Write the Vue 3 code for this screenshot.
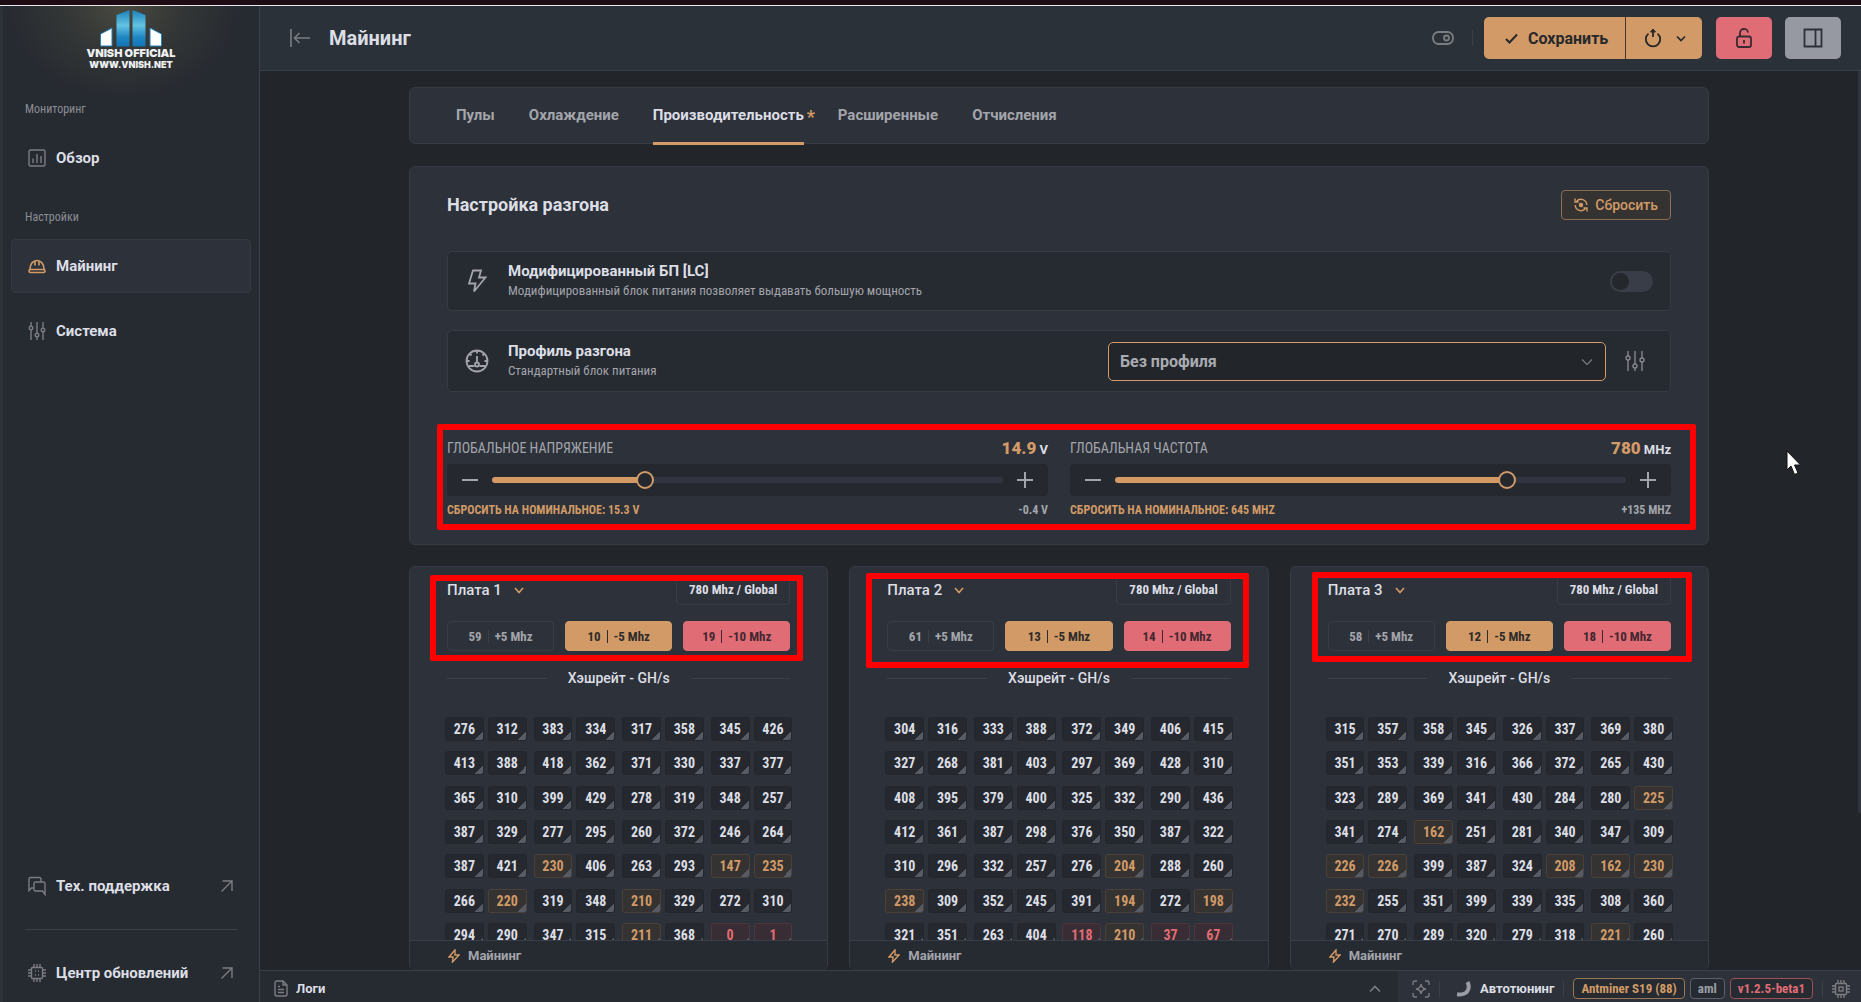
<script setup>
import { ref } from 'vue'

const tabs = ['Пулы', 'Охлаждение', 'Производительность', 'Расширенные', 'Отчисления']
const activeTab = ref('Производительность')
const modifiedPsu = ref(false)
const profile = ref('none')

const sliders = ref([
  {
    id: 'voltage', label: 'Глобальное напряжение', value: 14.9, min: 13.7, max: 17.8, step: 0.1,
    unit: 'V', reset: 'Сбросить на номинальное: 15.3 V', delta: '-0.4 V',
  },
  {
    id: 'frequency', label: 'Глобальная частота', value: 780, min: 220, max: 940, step: 5,
    unit: 'MHz', reset: 'Сбросить на номинальное: 645 MHz', delta: '+135 MHz',
  },
])

const fillOf = (s) => (s.value - s.min) / (s.max - s.min)

const boards = [
  {
    id: 1, counts: [59, 10, 19],
    rows: [
      [276, 312, 383, 334, 317, 358, 345, 426],
      [413, 388, 418, 362, 371, 330, 337, 377],
      [365, 310, 399, 429, 278, 319, 348, 257],
      [387, 329, 277, 295, 260, 372, 246, 264],
      [387, 421, 230, 406, 263, 293, 147, 235],
      [266, 220, 319, 348, 210, 329, 272, 310],
      [294, 290, 347, 315, 211, 368, 0, 1],
    ],
  },
  {
    id: 2, counts: [61, 13, 14],
    rows: [
      [304, 316, 333, 388, 372, 349, 406, 415],
      [327, 268, 381, 403, 297, 369, 428, 310],
      [408, 395, 379, 400, 325, 332, 290, 436],
      [412, 361, 387, 298, 376, 350, 387, 322],
      [310, 296, 332, 257, 276, 204, 288, 260],
      [238, 309, 352, 245, 391, 194, 272, 198],
      [321, 351, 263, 404, 118, 210, 37, 67],
    ],
  },
  {
    id: 3, counts: [58, 12, 18],
    rows: [
      [315, 357, 358, 345, 326, 337, 369, 380],
      [351, 353, 339, 316, 366, 372, 265, 430],
      [323, 289, 369, 341, 430, 284, 280, 225],
      [341, 274, 162, 251, 281, 340, 347, 309],
      [226, 226, 399, 387, 324, 208, 162, 230],
      [232, 255, 351, 399, 339, 335, 308, 360],
      [271, 270, 289, 320, 279, 318, 221, 260],
    ],
  },
]

const level = (v) => (v < 120 ? 'bad' : v < 240 ? 'warn' : '')
const pairs = (row) => [0, 2, 4, 6].map((i) => row.slice(i, i + 2))
</script>

<template>
  <div class="screen">
    <div class="frame-top"></div>
    <div class="app">
      <aside class="sidebar">
        <div class="logo">
          <svg width="64" height="38" viewBox="0 0 64 38" aria-hidden="true">
            <defs>
              <linearGradient id="tower" x1="0" y1="0" x2="0" y2="1">
                <stop offset="0" stop-color="#1a80bb" />
                <stop offset=".42" stop-color="#63c3e2" />
                <stop offset=".75" stop-color="#1f86c4" />
                <stop offset="1" stop-color="#1273b4" />
              </linearGradient>
            </defs>
            <path d="M1.500 37V25L13 19V37Z" fill="#fff" stroke="#2380b8" stroke-width="1" />
            <path d="M62.500 37V25L51 19V37Z" fill="#fff" stroke="#2380b8" stroke-width="1" />
            <path d="M17.500 37.500V6L30.500 1V37.500Z" fill="url(#tower)" stroke="none" />
            <path d="M46.500 37.500V6L33.500 1V37.500Z" fill="url(#tower)" stroke="none" />
          </svg>
          <span class="logo-name">VNISH OFFICIAL</span>
          <span class="logo-site">WWW.VNISH.NET</span>
        </div>

        <nav class="menu">
          <p class="menu-title">Мониторинг</p>
          <a class="item" href="#">
            <svg class="ico" width="18" height="18" viewBox="0 0 18 18"><rect x="1" y="1" width="16" height="16" rx="1.500" /><path d="M5 9.500V14M9 5V14M13 7V14" /></svg>
            <span>Обзор</span>
          </a>
          <p class="menu-title second">Настройки</p>
          <a class="item active" href="#">
            <svg class="ico" width="18" height="18" viewBox="0 0 18 18"><rect x="1" y="12.500" width="16" height="3" rx="1.500" /><path d="M2 12C2 7 5 3.500 9 3.500S16 7 16 12M7 4V8.500M11 4V8.500" /></svg>
            <span>Майнинг</span>
          </a>
          <a class="item" href="#">
            <svg class="ico" width="18" height="20" viewBox="0 0 18 20"><path d="M3 1V5M3 9V19M9 1V12M9 16V19M15 1V7M15 11V19" /><circle cx="3" cy="7" r="1.800" /><circle cx="9" cy="14" r="1.800" /><circle cx="15" cy="9" r="1.800" /></svg>
            <span>Система</span>
          </a>
        </nav>

        <nav class="menu bottom">
          <a class="item" href="#">
            <svg class="ico" width="18" height="20" viewBox="0 0 18 20"><path d="M13 6V3Q13 1.500 11.500 1.500H2.500Q1 1.500 1 3V14.500L3.500 12H6" /><path d="M7.500 6H15.500Q17 6 17 7.500V18.500L14.500 15H7.500Q6 15 6 13.500V7.500Q6 6 7.500 6Z" /></svg>
            <span>Тех. поддержка</span>
            <svg class="ico out" width="12" height="12" viewBox="0 0 12 12"><path d="M.500 11.500L11 1M1.500 1H11V11" /></svg>
          </a>
          <hr />
          <a class="item" href="#">
            <svg class="ico" width="18" height="18" viewBox="0 0 18 18"><rect x="3.500" y="3.500" width="11" height="11" rx="1" /><path d="M6 0V3.500M9 0V3.500M12 0V3.500M6 14.500V18M9 14.500V18M12 14.500V18M0 6H3.500M0 9H3.500M0 12H3.500M14.500 6H18M14.500 9H18M14.500 12H18" /><path d="M7 7H8M10 7H11M7 11H8M10 11H11" /></svg>
            <span>Центр обновлений</span>
            <svg class="ico out" width="12" height="12" viewBox="0 0 12 12"><path d="M.500 11.500L11 1M1.500 1H11V11" /></svg>
          </a>
        </nav>
      </aside>

      <div class="main">
        <header class="header">
          <button class="bare" aria-label="Свернуть меню">
            <svg class="ico" width="20" height="18" viewBox="0 0 20 18"><path d="M1 0V18M20 9H5M9.500 4L4.500 9L9.500 14" stroke-width="1.600" /></svg>
          </button>
          <h1>Майнинг</h1>
          <button class="bare push" aria-label="Режим">
            <svg class="ico" width="22" height="14" viewBox="0 0 22 14"><rect x="1" y="1" width="20" height="12" rx="5.500" stroke-width="1.800" /><circle cx="14.500" cy="7" r="2.500" stroke-width="1.800" /></svg>
          </button>
          <span class="vr"></span>
          <div class="save">
            <button class="save-main">
              <svg width="13" height="11" viewBox="0 0 13 11"><path d="M1 6L4.500 9.500L12 1.500" /></svg>
              <span>Сохранить</span>
            </button>
            <button class="save-more" aria-label="Действия">
              <svg width="18" height="20" viewBox="0 0 18 20"><path d="M4.500 5.600A7.200 7.200 0 1 0 13.500 5.600M9 9V2" stroke-width="1.800" /><path d="M6.500 4L9 1L11.500 4Z" fill="currentColor" stroke-width="1" /></svg>
              <svg width="10" height="7" viewBox="0 0 10 7"><path d="M1 1.500L5 5.500L9 1.500" stroke-width="1.700" /></svg>
            </button>
          </div>
          <button class="square lock" aria-label="Блокировка">
            <svg width="16" height="20" viewBox="0 0 16 20"><rect x="1" y="8.500" width="14" height="10.500" rx="2" /><path d="M4 8.500V5.500A4 4 0 0 1 12 4.500M8 12V15.500" /></svg>
          </button>
          <button class="square panel" aria-label="Панель">
            <svg width="20" height="20" viewBox="0 0 20 20"><path d="M1.500 1.500H18.500V18.500H1.500ZM12.500 1.500V18.500" /></svg>
          </button>
        </header>

        <div class="content">
          <div class="column">
            <nav class="card tabs">
              <button v-for="t in tabs" :key="t" class="tab" :class="{ on: t === activeTab }" @click="activeTab = t">
                {{ t }}<i v-if="t === 'Производительность'">*</i>
              </button>
            </nav>

            <section class="card settings">
              <div class="settings-head">
                <h2>Настройка разгона</h2>
                <button class="reset">
                  <svg width="14" height="14" viewBox="0 0 14 14"><path d="M2.500 3.500A5.800 5.800 0 0 1 12.800 7M11.500 10.500A5.800 5.800 0 0 1 1.200 7M1 .500V4H4.500M13 13.500V10H9.500" /><circle cx="7" cy="7" r="1.500" fill="currentColor" /></svg>
                  <span>Сбросить</span>
                </button>
              </div>

              <div class="option">
                <svg class="ico big" width="24" height="24" viewBox="0 0 24 24"><path d="M8 1.500H16L14 8.500H20.500L9 22.500L10.500 14.500H4Z" /></svg>
                <label class="option-text" for="psu">
                  <b>Модифицированный БП [LC]</b>
                  <small>Модифицированный блок питания позволяет выдавать большую мощность</small>
                </label>
                <input id="psu" v-model="modifiedPsu" class="switch" type="checkbox" />
              </div>

              <div class="option tall">
                <svg class="ico big" width="24" height="24" viewBox="0 0 24 24"><circle cx="12" cy="12" r="10.500" /><path d="M3.500 17H9.500M14.500 17H20.500M12 7V13M12 2V4.500M2 12H4.500M19.500 12H22M5 5L6.500 6.500M19 5L17.500 6.500" /><circle cx="12" cy="15.500" r="2" /></svg>
                <label class="option-text" for="profile">
                  <b>Профиль разгона</b>
                  <small>Стандартный блок питания</small>
                </label>
                <div class="select">
                  <select id="profile" v-model="profile">
                    <option value="none">Без профиля</option>
                  </select>
                  <svg width="12" height="8" viewBox="0 0 12 8"><path d="M1 1.500L6 6.500L11 1.500" /></svg>
                </div>
                <button class="bare" aria-label="Параметры профиля">
                  <svg class="ico light" width="20" height="20" viewBox="0 0 20 20"><path d="M3 0V5M3 9V20M10 0V13M10 17V20M17 0V7M17 11V20" /><circle cx="3" cy="7" r="2" /><circle cx="10" cy="15" r="2" /><circle cx="17" cy="9" r="2" /></svg>
                </button>
              </div>

              <div class="sliders">
                <div v-for="s in sliders" :key="s.id" class="slider">
                  <div class="slider-row top">
                    <label :for="s.id">{{ s.label }}</label>
                    <span class="value"><b>{{ s.value }}</b> {{ s.unit }}</span>
                  </div>
                  <div class="slider-box">
                    <button class="bare" aria-label="Меньше"><svg width="16" height="16" viewBox="0 0 16 16"><path d="M0 8H16" /></svg></button>
                    <input :id="s.id" v-model.number="s.value" type="range" :min="s.min" :max="s.max" :step="s.step" :style="{ '--fill': fillOf(s) }" />
                    <button class="bare" aria-label="Больше"><svg width="16" height="16" viewBox="0 0 16 16"><path d="M0 8H16M8 0V16" /></svg></button>
                  </div>
                  <div class="slider-row low">
                    <button class="bare nominal">{{ s.reset }}</button>
                    <span>{{ s.delta }}</span>
                  </div>
                </div>
                <span class="mark mark-sliders"></span>
              </div>
            </section>

            <div class="boards">
              <section v-for="b in boards" :key="b.id" class="card board">
                <div class="board-body">
                  <div class="board-head">
                    <h3>Плата {{ b.id }}</h3>
                    <svg width="10" height="7" viewBox="0 0 10 7"><path d="M1 1L5 5.500L9 1" /></svg>
                    <span class="freq">780 Mhz / Global</span>
                  </div>
                  <div class="steps">
                    <button class="step">{{ b.counts[0] }}<i></i>+5 Mhz</button>
                    <button class="step orange">{{ b.counts[1] }}<i></i>-5 Mhz</button>
                    <button class="step red">{{ b.counts[2] }}<i></i>-10 Mhz</button>
                  </div>
                  <div class="rule"><span>Хэшрейт - GH/s</span></div>
                  <div class="chips">
                    <div v-for="(row, r) in b.rows" :key="r" class="chip-row">
                      <div v-for="(pair, p) in pairs(row)" :key="p" class="pair">
                        <span v-for="(v, i) in pair" :key="i" class="chip" :class="level(v)">{{ v }}</span>
                      </div>
                    </div>
                  </div>
                </div>
                <footer class="board-foot">
                  <svg width="12" height="14" viewBox="0 0 12 14"><path d="M7 1L1 8H5L4.500 13L11 6H7Z" /></svg>
                  <span>Майнинг</span>
                </footer>
                <span class="mark" :class="'mark-' + b.id"></span>
              </section>
            </div>
          </div>
          <span class="scrollbar"></span>
        </div>

        <footer class="status">
          <button class="bare logs">
            <svg class="ico" width="14" height="17" viewBox="0 0 14 17"><path d="M9 1H3Q1 1 1 3V14Q1 16 3 16H11Q13 16 13 14V5ZM9 1V5H13M4 6.500H6M4 9.500H10M4 12.500H10" /></svg>
            <span>Логи</span>
            <svg class="ico up" width="12" height="8" viewBox="0 0 12 8"><path d="M1 6.500L6 1.500L11 6.500" stroke-width="1.600" /></svg>
          </button>
          <div class="state">
            <svg class="ico" width="18" height="18" viewBox="0 0 18 18"><path d="M1 5V3Q1 1 3 1H5M13 1H15Q17 1 17 3V5M17 13V15Q17 17 15 17H13M5 17H3Q1 17 1 15V13" /><path d="M9 4Q9.500 8.500 14 9Q9.500 9.500 9 14Q8.500 9.500 4 9Q8.500 8.500 9 4Z" /></svg>
            <span class="vr"></span>
            <svg class="spinner" width="16" height="18" viewBox="0 0 16 18"><path d="M12.500 2Q15 7 12.500 11T2 14.500" fill="none" stroke="#9a9da5" stroke-width="4" /></svg>
            <b>Автотюнинг</b>
            <span class="vr"></span>
            <span class="tags">
              <span class="tag amber">Antminer S19 (88)</span>
              <span class="tag">aml</span>
              <span class="tag rose">v1.2.5-beta1</span>
            </span>
            <span class="vr"></span>
            <svg class="ico" width="18" height="18" viewBox="0 0 18 18"><rect x="3.500" y="3.500" width="11" height="11" rx="1" /><rect x="7" y="7" width="4" height="4" /><path d="M6 0V3.500M9 0V3.500M12 0V3.500M6 14.500V18M9 14.500V18M12 14.500V18M0 6H3.500M0 9H3.500M0 12H3.500M14.500 6H18M14.500 9H18M14.500 12H18" /></svg>
          </div>
        </footer>
      </div>
    </div>
    <svg class="pointer" width="16" height="26" viewBox="0 0 16 26"><path d="M1 1V20L5 16L8.500 24.500L12 23L8.500 15H14.500Z" fill="#fff" stroke="#111" /></svg>
  </div>
</template>

<style>
body { background: #222529; }
</style>

<style scoped>
* { box-sizing: border-box; }
.screen {
  --narrow: "Roboto Condensed", "Liberation Sans Narrow", Roboto, sans-serif;
  height: 100vh;
  display: flex;
  flex-direction: column;
  position: relative;
  overflow: hidden;
  font-family: Roboto, "Noto Sans", sans-serif;
  color: #dcdee5;
  font-size: 14px;
}
h1, h2, h3, p { margin: 0; }
button { font: inherit; color: inherit; border: 0; background: none; padding: 0; cursor: pointer; }
a { color: inherit; text-decoration: none; }
svg { flex: none; display: block; fill: none; stroke: currentColor; stroke-width: 2; }
.ico { color: #7b7d81; stroke-width: 1.4; }
.bare { display: flex; align-items: center; }
.vr { width: 1px; height: 16px; background: #3b404a; }
.frame-top { flex: none; height: 6px; background: #1e0c14; border-bottom: 1px solid #e8e8ea; }
.app { flex: 1; min-height: 0; display: flex; }

.sidebar {
  width: 260px;
  flex: none;
  display: flex;
  flex-direction: column;
  border-left: 3px solid #2d3139;
  border-right: 1px solid #3a3f4a;
  background: radial-gradient(ellipse 120px 96px at 120px 0, #4a4a40, #343736 45%, #262a31) #262a31;
}
.logo { display: flex; flex-direction: column; align-items: center; padding-top: 3px; height: 70px; }
.logo-name, .logo-site { font-family: Inter, sans-serif; font-weight: 900; color: #eef0f2; }
.logo-name { font-size: 11px; line-height: 13px; }
.logo-site { font-size: 9px; line-height: 9px; }
.menu { padding: 0 8px; display: flex; flex-direction: column; }
.menu-title { margin: 24px 0 13px 14px; font-family: var(--narrow); font-size: 12px; line-height: 18px; color: #8b8e95; }
.menu-title.second { margin-top: 23px; }
.item {
  height: 54px;
  display: flex;
  align-items: center;
  gap: 10px;
  padding: 0 17px 0 16px;
  border: 1px solid transparent;
  border-radius: 4px;
  font-size: 15px;
  font-weight: 700;
}
.item + .item { margin-top: 11px; }
.item.active { background: #2d3139; border-color: #343943; }
.item.active .ico { color: #d19a66; stroke-width: 1.6; }
.out { margin-left: auto; }
.bottom { margin-top: auto; padding-bottom: 2px; }
hr { width: 212px; border: 0; border-top: 1px solid #3b404a; margin: 16px 0 16px 14px; }

.main { flex: 1; min-width: 0; display: flex; flex-direction: column; }
.header {
  flex: none;
  height: 65px;
  padding: 0 20px 0 30px;
  display: flex;
  align-items: center;
  background: #2b3138;
  border-bottom: 1px solid #3a404b;
}
h1 { font-size: 20px; line-height: 24px; font-weight: 700; margin-left: 19px; }
.push { margin: 0 18px 0 auto; }
.save { display: flex; margin: 0 14px 0 11px; height: 42px; color: #26282c; background: #d19a66; border-radius: 5px; }
.save button { display: flex; align-items: center; }
.save .save-main { gap: 10px; width: 141px; padding-left: 21px; font-size: 16px; font-weight: 700; }
.save .save-more { gap: 14px; width: 77px; padding-left: 18px; border-left: 1px solid #3c3834; }
.square { width: 56px; height: 42px; border-radius: 5px; display: flex; align-items: center; justify-content: center; color: #3a2930; }
.square svg { stroke-width: 1.8; }
.lock { background: #e06c75; margin-right: 13px; }
.panel { background: #9699a2; color: #2d3037; }

.content { flex: 1; min-height: 0; display: flex; position: relative; padding: 16px 152px 0 149px; background: #222529; }
.scrollbar { position: absolute; right: 0; top: 0; width: 3px; bottom: 157px; background: #30343d; }
.column { flex: 1; min-width: 0; display: flex; flex-direction: column; }
.card { background: #2d3139; border: 1px solid #363b45; border-radius: 6px; }
.tabs { flex: none; display: flex; gap: 34px; height: 57px; padding: 0 46px; }
.tab { position: relative; height: 57px; padding-bottom: 3px; font-size: 15px; font-weight: 700; color: #a3a5ac; }
.tab.on { color: #dcdee5; }
.tab.on::after { content: ""; position: absolute; left: 0; right: 0; bottom: 0; height: 3px; background: #d19a66; }
.tab i { position: absolute; left: 100%; margin-left: 3px; font-style: normal; font-size: 18px; color: #d19a66; }

.settings { flex: none; margin-top: 22px; padding: 22px 37px 25px; }
.settings-head { display: flex; align-items: center; justify-content: space-between; height: 32px; margin-bottom: 30px; }
h2 { font-size: 18px; line-height: 20px; font-weight: 700; }
.reset {
  display: flex;
  align-items: center;
  gap: 7px;
  height: 30px;
  padding: 0 12px;
  border: 1px solid #8b6d52;
  border-radius: 4px;
  background: #353331;
  color: #d19a66;
  font-size: 14px;
  font-weight: 500;
}
.reset svg { stroke-width: 1.4; }
.option {
  height: 60px;
  display: flex;
  align-items: center;
  padding: 0 17px;
  background: #262a31;
  border: 1px solid #363b45;
  border-radius: 5px;
}
.option.tall { height: 62px; margin-top: 19px; padding-right: 25px; }
.option .ico { color: #a3a5ab; stroke-width: 1.8; }
.option .light { color: #85878c; stroke-width: 1.4; }
.option-text { flex: 1; margin-left: 19px; }
.option-text b { display: block; font-size: 15px; line-height: 20px; }
.option-text small { display: block; font-family: var(--narrow); font-size: 13px; line-height: 20px; color: #a3a5ac; }
.switch { appearance: none; width: 43px; height: 21px; margin: 0; border-radius: 11px; background: #383d48; padding: 2px; }
.switch::before { content: ""; display: block; width: 17px; height: 17px; border-radius: 50%; background: #24272b; }
.switch:checked::before { margin-left: auto; }
.select { position: relative; width: 498px; margin-right: 19px; }
.select select {
  appearance: none;
  width: 100%;
  height: 39px;
  padding: 0 11px;
  border: 1px solid #d19a66;
  border-radius: 5px;
  background: #222529;
  color: #a9abb2;
  font: 700 16px Roboto, "Noto Sans", sans-serif;
}
.select svg { position: absolute; right: 13px; top: 16px; stroke-width: 1.2; color: #777a82; pointer-events: none; }

.sliders { position: relative; display: grid; grid-template-columns: 1fr 1fr; gap: 22px; margin-top: 34px; padding-top: 12px; }
.slider-row { display: flex; align-items: center; justify-content: space-between; text-transform: uppercase; }
.top { height: 20px; font-size: 13px; color: #a3a5ac; margin-bottom: 6px; }
.top label { font-family: var(--narrow); font-size: 14px; }
.value { font-weight: 700; color: #dcdee5; text-transform: none; }
.value b { font-size: 17px; color: #d19a66; }
.slider-box { height: 32px; display: flex; align-items: center; gap: 14px; padding: 0 15px; background: #25292f; border-radius: 4px; }
.slider-box svg { color: #a3a5ab; }
.slider-box input {
  appearance: none;
  flex: 1;
  min-width: 0;
  height: 18px;
  margin: 0;
  background: none;
}
.slider-box input::-webkit-slider-runnable-track {
  height: 6px;
  border-radius: 3px;
  background:
    linear-gradient(#d19a66, #d19a66) no-repeat 0 0 / calc(9px + (100% - 18px) * var(--fill)) 100%,
    #31353f;
}
.slider-box input::-webkit-slider-thumb {
  appearance: none;
  width: 18px;
  height: 18px;
  margin-top: -6px;
  border: 2px solid #d19a66;
  border-radius: 50%;
  background: #25292f;
}
.low { height: 18px; margin-top: 5px; font-family: var(--narrow); font-size: 12px; font-weight: 700; color: #a3a5ac; }
.nominal { color: #d19a66; text-transform: uppercase; }

.mark { position: absolute; border: 6px solid #f00; border-radius: 2px; pointer-events: none; }
.mark-sliders { left: -10px; right: -25px; top: -2px; bottom: -11px; }
.mark-1 { left: 20px; right: 24px; top: 8px; height: 86px; }
.mark-2 { left: 16px; right: 19px; top: 6px; height: 95px; }
.mark-3 { left: 21px; right: 16px; top: 5px; height: 90px; }

.boards { flex: 1; min-height: 0; display: grid; grid-template-columns: repeat(3, 1fr); grid-template-rows: minmax(0, 1fr); gap: 21px; margin-top: 21px; }
.board { position: relative; display: flex; flex-direction: column; min-height: 0; border-bottom: 0; }
.board-body { flex: 1; min-height: 0; overflow: hidden; padding: 8px 37px 0; }
.board-head { display: flex; align-items: center; gap: 12px; height: 30px; color: #d19a66; }
h3 { font-size: 15px; font-weight: 500; color: #dcdee5; }
.board-head svg { stroke-width: 1.7; }
.freq {
  margin-left: auto;
  height: 30px;
  line-height: 28px;
  padding: 0 12px;
  border: 1px solid #383d48;
  border-radius: 4px;
  color: #dcdee5;
  font-family: var(--narrow);
  font-size: 13px;
  font-weight: 700;
}
.steps { display: grid; grid-template-columns: repeat(3, 1fr); gap: 11px; margin-top: 16px; }
.step {
  display: flex;
  align-items: center;
  justify-content: center;
  gap: 6px;
  height: 30px;
  border-radius: 4px;
  border: 1px solid #383d48;
  color: #a3a5ac;
  font-family: var(--narrow);
  font-size: 13px;
  font-weight: 700;
}
.step i { width: 1px; height: 13px; background: #3b404a; }
.step.orange { background: #d19a66; border-color: #d19a66; color: #2e2b2b; }
.step.red { background: #e06c75; border-color: #e06c75; color: #42272f; }
.step.orange i, .step.red i { background: currentColor; }
.rule { display: flex; align-items: center; gap: 21px; height: 20px; margin-top: 17px; font-size: 14px; font-weight: 500; }
.rule::before, .rule::after { content: ""; flex: 1; height: 1px; background: #3b404a; }
.chips { height: 230px; margin: 29px -2px 0; display: flex; flex-direction: column; justify-content: space-between; }
.chip-row { display: flex; gap: 7px; }
.pair { flex: 1; display: flex; gap: 4px; }
.chip {
  flex: 1;
  height: 24px;
  line-height: 22px;
  text-align: center;
  border: 1px solid #23262b;
  border-radius: 3px;
  background: linear-gradient(135deg, transparent 50%, #565b66 50%) no-repeat right bottom / 8px 8px #25292f;
  font-family: var(--narrow);
  font-size: 14px;
  font-weight: 700;
}
.chip.warn { color: #d19a66; background-color: #353332; border-color: #4c4138; }
.chip.bad { color: #e06c75; background-color: #382d34; border-color: #4f363e; }
.board-foot { flex: none; height: 30px; display: flex; align-items: center; gap: 8px; padding-left: 38px; background: #262a31; border-top: 1px solid #383d48; border-radius: 0 0 6px 6px; font-size: 13px; font-weight: 700; color: #a3a5ac; }
.board-foot svg { color: #d19a66; stroke-width: 1.4; }

.status { flex: none; height: 32px; display: flex; background: #262a31; border-top: 1px solid #3a3f4a; }
.logs { flex: 1; padding: 4px 17px 0 14px; gap: 8px; font-size: 13px; font-weight: 700; }
.up { margin-left: auto; }
.state { display: flex; align-items: center; gap: 9px; padding: 4px 11px 0 14px; background: #2d3139; }
.state b { font-size: 13px; }
.spinner { margin-left: 6px; }
.tags { display: flex; gap: 5px; }
.tag { height: 21px; line-height: 19px; padding: 0 7px; border: 1px solid #5c606a; border-radius: 4px; background: #262a31; font-family: var(--narrow); font-size: 13px; font-weight: 700; color: #9a9da5; }
.tag.amber { border-color: #9a7656; color: #d19a66; }
.tag.rose { border-color: #9e5059; color: #e06c75; }
.pointer { position: absolute; right: 59px; top: 450px; stroke-width: 1; }
</style>
